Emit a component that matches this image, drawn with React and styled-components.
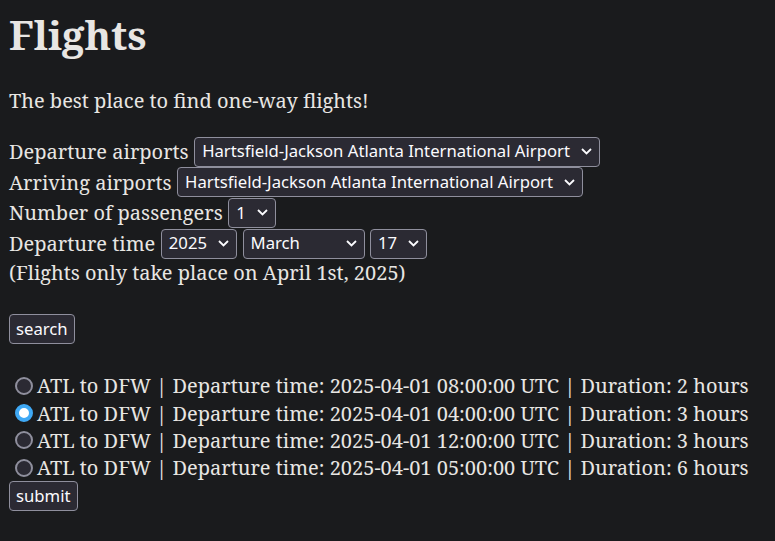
import styled, { createGlobalStyle } from "styled-components";
import { useState } from "react";

const airports = ["Hartsfield-Jackson Atlanta International Airport"];

const flights = [
  { id: 1, time: "2025-04-01 08:00:00", hours: 2 },
  { id: 2, time: "2025-04-01 04:00:00", hours: 3 },
  { id: 3, time: "2025-04-01 12:00:00", hours: 3 },
  { id: 4, time: "2025-04-01 05:00:00", hours: 6 },
];

function Dropdown({ value, width }) {
  return (
    <SelectWrap $width={width}>
      <span>{value}</span>
      <Chevron width="11" height="7" viewBox="0 0 11 7">
        <path d="M1 1 L5.5 5.5 L10 1" fill="none" stroke="#fbfbfe" strokeWidth="1.8" />
      </Chevron>
    </SelectWrap>
  );
}

export default function App() {
  const [picked, setPicked] = useState(2);

  return (
    <>
      <GlobalStyle />
      <Page>
        <Title>Flights</Title>
        <Intro>The best place to find one-way flights!</Intro>

        <Form>
          <Row>
            Departure airports<Dropdown value={airports[0]} />
          </Row>
          <Row>
            Arriving airports<Dropdown value={airports[0]} />
          </Row>
          <Row>
            Number of passengers<Dropdown value="1" />
          </Row>
          <Row>
            Departure time<Dropdown value="2025" />
            <Dropdown value="March" width={122} />
            <Dropdown value="17" />
          </Row>
          <Note>(Flights only take place on April 1st, 2025)</Note>
          <Button>search</Button>
        </Form>

        <Results>
          {flights.map((f) => (
            <Option key={f.id}>
              <Radio
                type="radio"
                name="flight"
                checked={picked === f.id}
                onChange={() => setPicked(f.id)}
              />
              ATL to DFW | Departure time: {f.time} UTC | Duration: {f.hours} hours
            </Option>
          ))}
          <Button>submit</Button>
        </Results>
      </Page>
    </>
  );
}

const GlobalStyle = createGlobalStyle`
  html, body {
    margin: 0;
    background: #1a1b1d;
  }
`;

const Page = styled.div`
  padding: 8px 9px;
  color: #e8e6e3;
  font-family: "Noto Serif", "DejaVu Serif", serif;
  font-size: 20px;
  line-height: 27.3px;
`;

const Title = styled.h1`
  margin: 0;
  font-size: 40px;
  line-height: 54px;
  font-weight: 700;
`;

const Intro = styled.p`
  margin: 25px 0 0;
`;

const Form = styled.div`
  margin-top: 22px;
  display: flex;
  flex-direction: column;
  align-items: flex-start;
`;

const Row = styled.div`
  display: flex;
  align-items: center;
  gap: 5.5px;
  height: 30.67px;
  white-space: pre;
`;

const SelectWrap = styled.div`
  box-sizing: border-box;
  height: 30px;
  display: inline-flex;
  align-items: center;
  justify-content: space-between;
  gap: 11px;
  padding: 0 7px 1px 7px;
  width: ${({ $width }) => ($width ? `${$width}px` : "auto")};
  background: #2b2a33;
  border: 1px solid #8f8f9d;
  border-radius: 4px;
  color: #fbfbfe;
  font-family: "Noto Sans", "Open Sans", sans-serif;
  font-size: 16.7px;
`;

const Chevron = styled.svg`
  flex-shrink: 0;
  margin-top: 1px;
`;

const Note = styled.p`
  margin: 0 0 28px;
`;

const Button = styled.button`
  box-sizing: border-box;
  height: 30px;
  padding: 0 6px 1px;
  background: #2b2a33;
  border: 1px solid #8f8f9d;
  border-radius: 4px;
  color: #fbfbfe;
  font-family: "Noto Sans", "Open Sans", sans-serif;
  font-size: 16.7px;
`;

const Results = styled.div`
  margin-top: 28px;
  display: flex;
  flex-direction: column;
  align-items: flex-start;
`;

const Option = styled.label`
  display: flex;
  align-items: center;
  white-space: pre;
`;

const Radio = styled.input`
  appearance: none;
  box-sizing: border-box;
  width: 18px;
  height: 18px;
  margin: 0 4px 0 6px;
  border-radius: 50%;
  border: 2px solid #8f8f9d;
  background: #2b2a33;

  &:checked {
    border: 4px solid #3fa9f5;
    background: #ffffff;
  }
`;
